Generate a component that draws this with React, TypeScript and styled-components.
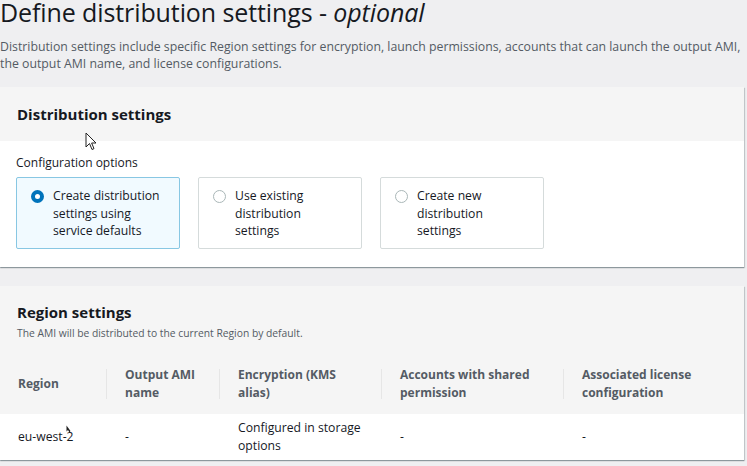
import React from "react";
import styled, { createGlobalStyle } from "styled-components";

const Global = createGlobalStyle`
  html, body { margin: 0; padding: 0; background: #efeff1; }
  body { font-family: "Open Sans", "Liberation Sans", Arial, sans-serif; color: #16191f; overflow: hidden; }
  * { box-sizing: border-box; }
`;

const Page = styled.div`
  position: relative;
  width: 747px;
  height: 466px;
  padding: 0 3px 0 0;
  display: flex;
  flex-direction: column;
`;

const Title = styled.h1`
  margin: 0;
  padding-top: 1px;
  font-size: 25px;
  line-height: 23px;
  font-weight: 400;
  color: #16191f;
  letter-spacing: -0.1px;
  em { font-style: italic; }
`;

const Description = styled.p`
  margin: 14px 0 0;
  font-size: 12.3px;
  line-height: 17px;
  color: #545b64;
`;

const Card = styled.section<{ $top: number }>`
  margin-top: ${(p) => p.$top}px;
  background: #fff;
  box-shadow: 0 1px 1px 0 rgba(0, 28, 36, 0.3), 1px 1px 1px 0 rgba(0, 28, 36, 0.15);
  display: flex;
  flex-direction: column;
`;

const CardHeader = styled.div<{ $h: number }>`
  background: #f5f5f5;
  height: ${(p) => p.$h}px;
  padding: 0 17px 1px;
  display: flex;
  flex-direction: column;
  justify-content: center;
`;

const CardTitle = styled.h2`
  margin: 0;
  font-size: 15px;
  line-height: 20px;
  font-weight: 700;
  color: #16191f;
`;

const CardBody = styled.div`
  padding: 13px 16px 18px;
`;

const Label = styled.div`
  font-size: 12px;
  line-height: 18px;
  color: #16191f;
  margin-bottom: 5px;
`;

const Tiles = styled.div`
  display: flex;
  gap: 18px;
`;

const Tile = styled.label<{ $selected?: boolean }>`
  width: 164px;
  height: 72px;
  border: 1px solid ${(p) => (p.$selected ? "#88c7e3" : "#d5dbdb")};
  background: ${(p) => (p.$selected ? "#f1faff" : "#fff")};
  border-radius: 2px;
  padding: 9px 10px 0 14px;
  display: flex;
  gap: 9px;
  align-items: flex-start;
`;

const Radio = styled.span<{ $checked?: boolean }>`
  flex: none;
  width: 13px;
  height: 13px;
  margin-top: 3px;
  border-radius: 50%;
  border: ${(p) => (p.$checked ? "4px solid #0073bb" : "1px solid #aab7b8")};
  background: #fff;
`;

const TileText = styled.span`
  max-width: 112px;
  font-size: 12.2px;
  line-height: 17.5px;
  color: #16191f;
`;

const SubText = styled.div`
  margin-top: 4px;
  font-size: 10.3px;
  line-height: 14px;
  color: #545b64;
`;

const RegionHead = styled.div`
  background: #f5f5f5;
  padding: 16px 17px 0;
  height: 67px;
`;

const Grid = styled.div<{ $bg: string; $h: number }>`
  display: grid;
  grid-template-columns: 106px 113px 162px 182px 1fr;
  background: ${(p) => p.$bg};
  height: ${(p) => p.$h}px;
  align-items: center;
`;

const Th = styled.div<{ $sep?: boolean }>`
  position: relative;
  padding-left: ${(p) => (p.$sep ? 19 : 18)}px;
  padding-right: 20px;
  font-size: 12px;
  line-height: 17.5px;
  font-weight: 700;
  color: #545b64;
  &::before {
    content: "";
    display: ${(p) => (p.$sep ? "block" : "none")};
    position: absolute;
    left: 0;
    top: 50%;
    margin-top: -15px;
    height: 30px;
    width: 1px;
    background: #e6e6e6;
  }
`;

const Td = styled.div<{ $first?: boolean }>`
  padding-left: ${(p) => (p.$first ? 18 : 19)}px;
  padding-right: 20px;
  font-size: 12.2px;
  line-height: 18px;
  color: #16191f;
`;

const Cursor = styled.svg<{ $x: number; $y: number }>`
  position: absolute;
  left: ${(p) => p.$x}px;
  top: ${(p) => p.$y}px;
  pointer-events: none;
`;

const options = [
  { text: "Create distribution settings using service defaults", selected: true },
  { text: "Use existing distribution settings" },
  { text: "Create new distribution settings" },
];

const columns = [
  "Region",
  "Output AMI name",
  "Encryption (KMS alias)",
  "Accounts with shared permission",
  "Associated license configuration",
];

const row = ["eu-west-2", "-", "Configured in storage options", "-", "-"];

export default function App() {
  return (
    <>
      <Global />
      <Page>
        <Title>
          Define distribution settings - <em>optional</em>
        </Title>
        <Description>
          Distribution settings include specific Region settings for encryption, launch permissions, accounts that can
          launch the output AMI, the output AMI name, and license configurations.
        </Description>

        <Card $top={15}>
          <CardHeader $h={54}>
            <CardTitle>Distribution settings</CardTitle>
          </CardHeader>
          <CardBody>
            <Label>Configuration options</Label>
            <Tiles>
              {options.map((o) => (
                <Tile key={o.text} $selected={o.selected}>
                  <Radio $checked={o.selected} />
                  <TileText>{o.text}</TileText>
                </Tile>
              ))}
            </Tiles>
          </CardBody>
        </Card>

        <Card $top={19}>
          <RegionHead>
            <CardTitle>Region settings</CardTitle>
            <SubText>The AMI will be distributed to the current Region by default.</SubText>
          </RegionHead>
          <Grid $bg="#f5f5f5" $h={61}>
            {columns.map((c, i) => (
              <Th key={c} $sep={i > 0}>
                {c}
              </Th>
            ))}
          </Grid>
          <Grid $bg="#fff" $h={46}>
            {row.map((c, i) => (
              <Td key={i} $first={i === 0}>
                {c}
              </Td>
            ))}
          </Grid>
        </Card>

        <Cursor $x={85} $y={132} width="12" height="19" viewBox="0 0 12 19">
          <path d="M1 1 L1 15 L4.5 11.5 L7 17.5 L9 16.6 L6.6 11 L11 11 Z" fill="#fff" stroke="#222" strokeWidth="1" strokeLinejoin="round" />
        </Cursor>
        <Cursor $x={66} $y={425} width="5" height="8" viewBox="0 0 5 8">
          <path d="M0.5 0.5 L0.5 6.5 L2 5 L3.5 7.5 L4.5 6 Z" fill="#222" />
        </Cursor>
      </Page>
    </>
  );
}
